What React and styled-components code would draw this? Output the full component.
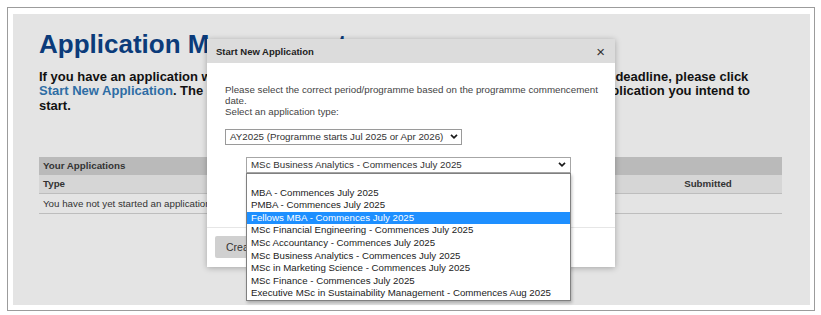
import React from 'react';
import styled, { createGlobalStyle } from 'styled-components';

const GlobalStyle = createGlobalStyle`
  body {
    margin: 0;
    background: #fff;
    font-family: "Liberation Sans", Arial, sans-serif;
  }
`;

const Root = styled.div`
  position: relative;
  width: 821px;
  height: 315px;
  overflow: hidden;
`;

const Frame = styled.div`
  margin: 7px 6px 0 7px;
  height: 304px;
  box-sizing: border-box;
  border: 1px solid #9c9c9c;
  padding: 6px 4px 5px 5px;
`;

const Page = styled.div`
  height: 100%;
  background: #e4e4e4;
  padding: 15px 28px 0 26px;
  box-sizing: border-box;
`;

const Title = styled.h1`
  margin: 0;
  font-size: 26px;
  line-height: 30px;
  font-weight: bold;
  color: #0b3b7a;
  white-space: nowrap;
`;

const Intro = styled.p`
  margin: 10.7px 0 0;
  font-size: 13px;
  line-height: 14.4px;
  font-weight: bold;
  color: #111;
  white-space: nowrap;
`;

const Link = styled.a`
  color: #2e6da4;
  text-decoration: none;
`;

const Applications = styled.div`
  margin-top: 44px;
  font-size: 9.75px;
  color: #333;
`;

const Caption = styled.div`
  height: 18px;
  display: flex;
  align-items: center;
  padding: 0 4px;
  background: #bababa;
  font-weight: bold;
`;

const Row = styled.div`
  display: grid;
  grid-template-columns: 1fr 148px;
  align-items: center;
  height: ${p => (p.$head ? 18 : 19)}px;
  background: ${p => (p.$head ? '#d6d6d6' : 'transparent')};
  border-bottom: 1px solid #bdbdbd;
  font-weight: ${p => (p.$head ? 'bold' : 'normal')};
`;

const Cell = styled.div`
  padding: 0 4px;
  text-align: ${p => p.$align || 'left'};
  grid-column: ${p => (p.$span ? '1 / -1' : 'auto')};
  white-space: nowrap;
`;

const Dialog = styled.div`
  position: absolute;
  left: 207px;
  top: 39px;
  width: 408px;
  background: #fff;
  box-shadow: 0 1px 6px rgba(0, 0, 0, 0.28);
  z-index: 10;
`;

const DialogHeader = styled.div`
  height: 24px;
  display: flex;
  align-items: center;
  justify-content: space-between;
  padding: 0 9px 0 9px;
  background: #dcdcdc;
`;

const DialogTitle = styled.span`
  font-size: 9.5px;
  font-weight: bold;
  color: #222;
`;

const CloseButton = styled.span`
  font-size: 15px;
  line-height: 15px;
  color: #333;
  margin-right: 1px;
`;

const DialogBody = styled.div`
  height: 164px;
  box-sizing: border-box;
  padding: 20.6px 12px 0 18px;
`;

const Note = styled.p`
  margin: 0;
  font-size: 9.75px;
  line-height: 11px;
  color: #444;
`;

const SelectWrap = styled.div`
  position: relative;
  width: ${p => p.$width}px;
  margin: ${p => p.$top}px 0 0 ${p => p.$indent || 0}px;
`;

const SelectBox = styled.div`
  height: 16px;
  box-sizing: border-box;
  border: 1px solid ${p => p.$border || '#9a9a9a'};
  background: #fff;
  display: flex;
  align-items: center;
  justify-content: space-between;
  padding: 0 ${p => p.$chevronGap}px 0 4px;
  font-size: 9.75px;
  color: #333;
  white-space: nowrap;
`;

const Chevron = () => (
  <svg width="8" height="5" viewBox="0 0 8 5">
    <polyline points="1,0.8 4,3.8 7,0.8" fill="none" stroke="#1a1a1a" strokeWidth="1.7" />
  </svg>
);

const OptionList = styled.ul`
  position: absolute;
  top: 100%;
  left: 0;
  width: 100%;
  box-sizing: border-box;
  margin: 0;
  padding: 0;
  list-style: none;
  background: #fff;
  border: 1px solid #808080;
  box-shadow: 1px 2px 3px rgba(0, 0, 0, 0.25);
  z-index: 20;
`;

const Option = styled.li`
  height: 12.6px;
  line-height: 12.6px;
  padding: 0 4px;
  font-size: 9.7px;
  white-space: nowrap;
  color: ${p => (p.$active ? '#fff' : '#222')};
  background: ${p => (p.$active ? '#1e8fff' : 'transparent')};
`;

const DialogFooter = styled.div`
  height: 40px;
  box-sizing: border-box;
  border-top: 1px solid #e6e6e6;
  padding: 8px 8px;
`;

const Button = styled.button`
  height: 22px;
  padding: 0 11px;
  border: none;
  border-radius: 2px;
  background: #d0d0d0;
  font-family: inherit;
  font-size: 10.5px;
  color: #333;
`;

const programmes = [
  '',
  'MBA - Commences July 2025',
  'PMBA - Commences July 2025',
  'Fellows MBA - Commences July 2025',
  'MSc Financial Engineering - Commences July 2025',
  'MSc Accountancy - Commences July 2025',
  'MSc Business Analytics - Commences July 2025',
  'MSc in Marketing Science - Commences July 2025',
  'MSc Finance - Commences July 2025',
  'Executive MSc in Sustainability Management - Commences Aug 2025',
];

export default function App() {
  return (
    <Root>
      <GlobalStyle />
      <Frame>
        <Page>
          <Title>Application Management</Title>
          <Intro>
            If you have an application which you would like to submit before your next round application deadline, please click
            <br />
            <Link href="#">Start New Application</Link>. The system will then ask you to select the right programme type of application you intend to
            <br />
            start.
          </Intro>

          <Applications>
            <Caption>Your Applications</Caption>
            <Row $head>
              <Cell>Type</Cell>
              <Cell $align="center">Submitted</Cell>
            </Row>
            <Row>
              <Cell $span>You have not yet started an application.</Cell>
            </Row>
          </Applications>
        </Page>
      </Frame>

      <Dialog>
        <DialogHeader>
          <DialogTitle>Start New Application</DialogTitle>
          <CloseButton>×</CloseButton>
        </DialogHeader>
        <DialogBody>
          <Note>
            Please select the correct period/programme based on the programme commencement date.
            <br />
            Select an application type:
          </Note>
          <SelectWrap $width={237} $top={12.4}>
            <SelectBox $chevronGap={3}>
              AY2025 (Programme starts Jul 2025 or Apr 2026)
              <Chevron />
            </SelectBox>
          </SelectWrap>
          <SelectWrap $width={325} $top={12} $indent={21}>
            <SelectBox $chevronGap={4} $border="#a6a6a6">
              MSc Business Analytics - Commences July 2025
              <Chevron />
            </SelectBox>
            <OptionList>
              {programmes.map((p, i) => (
                <Option key={i} $active={i === 3}>{p}</Option>
              ))}
            </OptionList>
          </SelectWrap>
        </DialogBody>
        <DialogFooter>
          <Button>Create</Button>
        </DialogFooter>
      </Dialog>
    </Root>
  );
}
